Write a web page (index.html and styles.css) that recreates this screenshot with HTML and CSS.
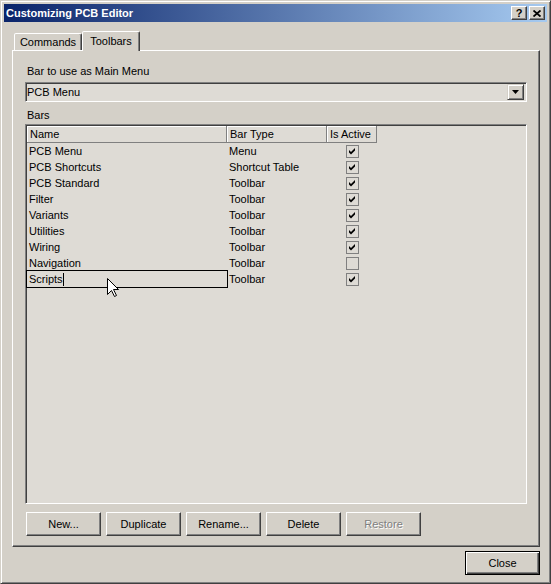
FILE: index.html
```
<!DOCTYPE html>
<html lang="en">
<head>
    <meta charset="UTF-8">
    <title>Customizing PCB Editor</title>
    <link rel="stylesheet" href="styles.css">
</head>
<body>

<div class="window">

    <!-- Title bar -->
    <div class="titlebar">
        <span class="title">Customizing PCB Editor</span>
        <div class="caption-buttons">
            <span class="cap-btn">?</span>
            <span class="cap-btn">
                <svg width="8" height="7" viewBox="0 0 8 7"><path d="M0.5 0.5 L7.5 6.5 M7.5 0.5 L0.5 6.5" stroke="#000" stroke-width="1.8" fill="none"/></svg>
            </span>
        </div>
    </div>

    <div class="content">

        <!-- Tabs -->
        <div class="tabs">
            <div class="tab">Commands</div>
            <div class="tab active">Toolbars</div>
        </div>

        <div class="panel">
            <div class="label">Bar to use as Main Menu</div>
            <div class="combo">
                <span class="combo-text">PCB Menu</span>
                <span class="combo-btn">
                    <svg width="7" height="4" viewBox="0 0 7 4"><path d="M0 0 H7 L3.5 4 Z" fill="#000"/></svg>
                </span>
            </div>

            <div class="label label-bars">Bars</div>
            <div class="list">
                <div class="row head">
                    <div class="cell col-name">Name</div>
                    <div class="cell col-type">Bar Type</div>
                    <div class="cell col-active">Is Active</div>
                </div>
                <div class="row">
                    <div class="cell col-name">PCB Menu</div>
                    <div class="cell col-type">Menu</div>
                    <div class="cell col-active"><span class="check on"><svg viewBox="0 0 11 11"><path d="M2 4 L4 6 L8 2 L8 4.5 L4 8.5 L2 6.5 Z"/></svg></span></div>
                </div>
                <div class="row">
                    <div class="cell col-name">PCB Shortcuts</div>
                    <div class="cell col-type">Shortcut Table</div>
                    <div class="cell col-active"><span class="check on"><svg viewBox="0 0 11 11"><path d="M2 4 L4 6 L8 2 L8 4.5 L4 8.5 L2 6.5 Z"/></svg></span></div>
                </div>
                <div class="row">
                    <div class="cell col-name">PCB Standard</div>
                    <div class="cell col-type">Toolbar</div>
                    <div class="cell col-active"><span class="check on"><svg viewBox="0 0 11 11"><path d="M2 4 L4 6 L8 2 L8 4.5 L4 8.5 L2 6.5 Z"/></svg></span></div>
                </div>
                <div class="row">
                    <div class="cell col-name">Filter</div>
                    <div class="cell col-type">Toolbar</div>
                    <div class="cell col-active"><span class="check on"><svg viewBox="0 0 11 11"><path d="M2 4 L4 6 L8 2 L8 4.5 L4 8.5 L2 6.5 Z"/></svg></span></div>
                </div>
                <div class="row">
                    <div class="cell col-name">Variants</div>
                    <div class="cell col-type">Toolbar</div>
                    <div class="cell col-active"><span class="check on"><svg viewBox="0 0 11 11"><path d="M2 4 L4 6 L8 2 L8 4.5 L4 8.5 L2 6.5 Z"/></svg></span></div>
                </div>
                <div class="row">
                    <div class="cell col-name">Utilities</div>
                    <div class="cell col-type">Toolbar</div>
                    <div class="cell col-active"><span class="check on"><svg viewBox="0 0 11 11"><path d="M2 4 L4 6 L8 2 L8 4.5 L4 8.5 L2 6.5 Z"/></svg></span></div>
                </div>
                <div class="row">
                    <div class="cell col-name">Wiring</div>
                    <div class="cell col-type">Toolbar</div>
                    <div class="cell col-active"><span class="check on"><svg viewBox="0 0 11 11"><path d="M2 4 L4 6 L8 2 L8 4.5 L4 8.5 L2 6.5 Z"/></svg></span></div>
                </div>
                <div class="row">
                    <div class="cell col-name">Navigation</div>
                    <div class="cell col-type">Toolbar</div>
                    <div class="cell col-active"><span class="check"></span></div>
                </div>
                <div class="row">
                    <div class="cell col-name editing">Scripts<span class="caret"></span></div>
                    <div class="cell col-type">Toolbar</div>
                    <div class="cell col-active"><span class="check on"><svg viewBox="0 0 11 11"><path d="M2 4 L4 6 L8 2 L8 4.5 L4 8.5 L2 6.5 Z"/></svg></span></div>
                </div>
            </div>

            <div class="buttons">
                <button class="btn">New...</button>
                <button class="btn">Duplicate</button>
                <button class="btn">Rename...</button>
                <button class="btn">Delete</button>
                <button class="btn disabled">Restore</button>
            </div>
        </div>

        <div class="footer">
            <button class="btn default">Close</button>
        </div>
    </div>

    <!-- mouse pointer over the edited row -->
    <svg class="cursor" width="13" height="20" viewBox="0 0 13 20">
        <path d="M0.5 0.5 V16.5 L4.5 12.5 L7.5 18.5 L9.5 17.5 L6.5 11.5 H11.5 Z" fill="#fff" stroke="#000" stroke-width="1"/>
    </svg>
</div>

</body>
</html>
```

FILE: styles.css
```
body {
    margin: 0;
    background: #d4d0c8;
    font-family: "Liberation Sans", Arial, sans-serif;
    font-size: 11px;
    color: #000;
}

/* Window frame */
.window {
    position: relative;
    width: 551px;
    height: 584px;
    box-sizing: border-box;
    background: #d4d0c8;
    border: 1px solid;
    border-color: #d4d0c8 #404040 #404040 #d4d0c8;
    box-shadow: inset 1px 1px #fff, inset -1px -1px #808080;
    padding: 3px;
}

.titlebar {
    height: 18px;
    display: flex;
    align-items: center;
    justify-content: space-between;
    padding: 0 2px 0 2px;
    background: linear-gradient(to right, #0a246a, #a6caf0);
}

.title {
    color: #fff;
    font-weight: bold;
    font-size: 11px;
}

.caption-buttons {
    display: flex;
    gap: 2px;
}

.cap-btn {
    width: 16px;
    height: 14px;
    box-sizing: border-box;
    background: #d4d0c8;
    border: 1px solid;
    border-color: #fff #404040 #404040 #fff;
    box-shadow: inset -1px -1px #808080;
    display: flex;
    align-items: center;
    justify-content: center;
    font-weight: bold;
    font-size: 11px;
    line-height: 1;
}

.content {
    padding: 9px 7px 0 8px;
}

/* Tabs */
.tabs {
    height: 19px;
    display: flex;
    align-items: flex-end;
    padding-left: 2px;
}

.tab {
    box-sizing: border-box;
    height: 17px;
    width: 68px;
    border: 1px solid;
    border-bottom: none;
    border-color: #fff #404040 transparent #fff;
    box-shadow: inset -1px 0 #808080;
    border-radius: 2px 2px 0 0;
    display: flex;
    align-items: center;
    justify-content: center;
    background: #d4d0c8;
}

.tab.active {
    width: 58px;
    height: 20px;
    margin-bottom: -1px;
    position: relative;
    z-index: 1;
    padding-bottom: 2px;
}

/* Tab page */
.panel {
    border: 1px solid;
    border-color: #fff #404040 #404040 #fff;
    box-shadow: inset -1px -1px #808080;
    padding: 13px 12px 10px 12px;
}

.label {
    line-height: 14px;
    height: 14px;
    padding-left: 2px;
}

.label-bars {
    margin-top: 6px;
}

.combo {
    margin-top: 4px;
    height: 20px;
    box-sizing: border-box;
    border: 1px solid;
    border-color: #808080 #fff #fff #808080;
    box-shadow: inset 1px 1px #404040;
    background: #dedbd5;
    display: flex;
    align-items: center;
    padding: 0 2px 0 1px;
}

.combo-btn {
    margin-left: auto;
    width: 17px;
    height: 16px;
    box-sizing: border-box;
    background: #d4d0c8;
    border: 1px solid;
    border-color: #d4d0c8 #404040 #404040 #d4d0c8;
    box-shadow: inset 1px 1px #fff, inset -1px -1px #808080;
    display: flex;
    align-items: center;
    justify-content: center;
}

/* Bars list */
.list {
    margin-top: 2px;
    height: 380px;
    box-sizing: border-box;
    border: 1px solid;
    border-color: #808080 #fff #fff #808080;
    box-shadow: inset 1px 1px #404040;
    background: #dedbd5;
    padding: 1px;
}

.row {
    display: flex;
    height: 16px;
    line-height: 16px;
}

.row.head {
    height: 17px;
}

.cell {
    box-sizing: border-box;
    padding-left: 2px;
    white-space: nowrap;
}

.col-name { width: 200px; }
.col-type { width: 100px; }
.col-active {
    width: 50px;
    display: flex;
    align-items: center;
    justify-content: center;
}

.head .cell {
    height: 17px;
    line-height: 16px;
    border-right: 1px solid #808080;
    border-bottom: 1px solid #808080;
    box-shadow: inset 1px 1px #fff;
    padding-left: 3px;
}

.head .col-active {
    display: block;
}

.check {
    width: 13px;
    height: 13px;
    box-sizing: border-box;
    border: 1px solid #808080;
    margin-right: 2px;
}

.check svg {
    display: block;
    width: 11px;
    height: 11px;
    fill: #000;
}

.editing {
    outline: 1px solid #000;
    position: relative;
}

.caret {
    display: inline-block;
    width: 1px;
    height: 13px;
    background: #000;
    vertical-align: -3px;
}

/* Buttons */
.buttons {
    margin-top: 8px;
    display: flex;
    gap: 5px;
    padding-left: 1px;
}

.btn {
    width: 75px;
    height: 24px;
    box-sizing: border-box;
    background: #d4d0c8;
    border: 1px solid;
    border-color: #fff #404040 #404040 #fff;
    box-shadow: inset -1px -1px #808080;
    font: inherit;
    color: #000;
    padding: 0;
}

.btn.disabled {
    color: #808080;
    text-shadow: 1px 1px #fff;
}

.footer {
    display: flex;
    justify-content: flex-end;
    padding-top: 4px;
}

.btn.default {
    border: 1px solid #000;
    box-shadow: inset 1px 1px #fff, inset -1px -1px #404040, inset -2px -2px #808080;
}

.cursor {
    position: absolute;
    left: 106px;
    top: 277px;
}
```
